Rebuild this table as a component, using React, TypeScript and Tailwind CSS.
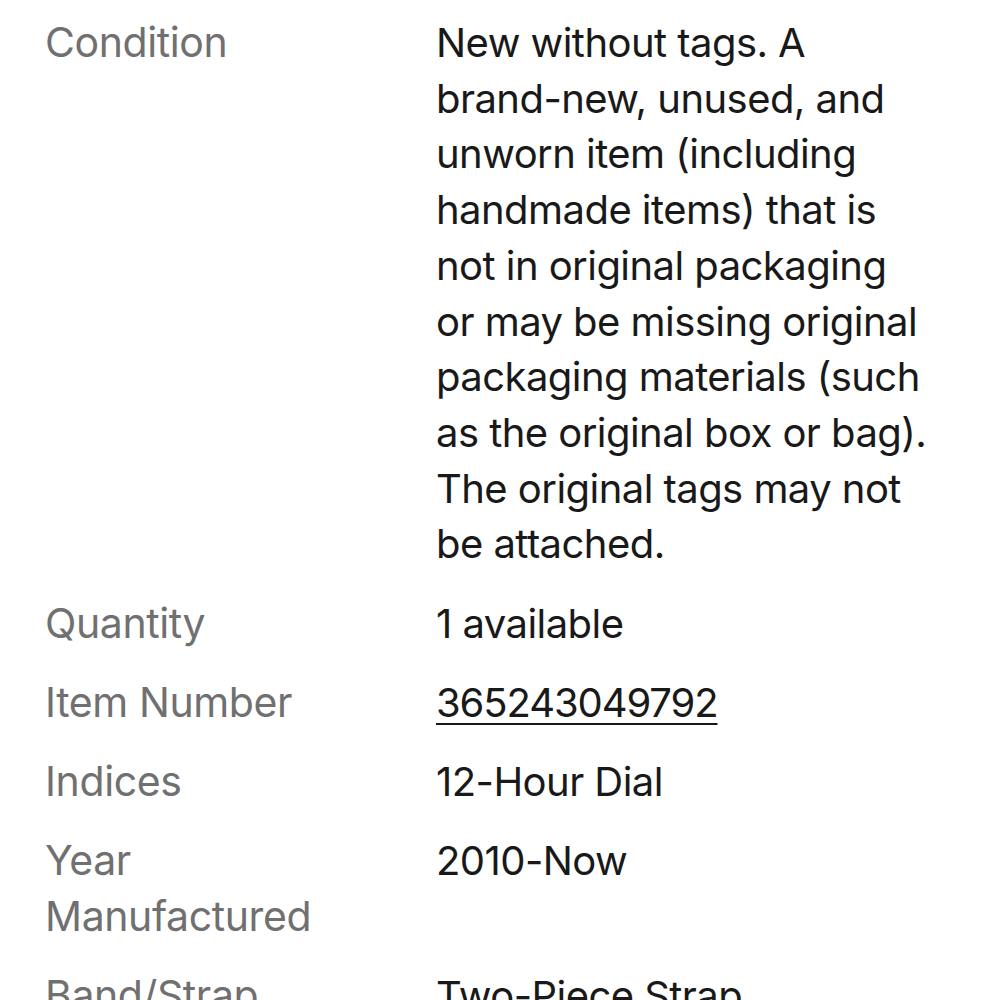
import React from "react";

const conditionLines = [
  "New without tags. A",
  "brand-new, unused, and",
  "unworn item (including",
  "handmade items) that is",
  "not in original packaging",
  "or may be missing original",
  "packaging materials (such",
  "as the original box or bag).",
  "The original tags may not",
  "be attached.",
];

const rows: { label: string; value: React.ReactNode }[] = [
  {
    label: "Condition",
    value: (
      <>
        {conditionLines.map((l) => (
          <span key={l} className="block whitespace-nowrap">
            {l}
          </span>
        ))}
      </>
    ),
  },
  { label: "Quantity", value: "1 available" },
  {
    label: "Item Number",
    value: (
      <span className="underline decoration-[2px] underline-offset-[6px] tracking-[-1.1px]">
        365243049792
      </span>
    ),
  },
  { label: "Indices", value: "12-Hour Dial" },
  { label: "Year Manufactured", value: "2010-Now" },
  { label: "Band/Strap", value: "Two-Piece Strap" },
];

export default function App() {
  return (
    <div
      className="w-[1000px] h-[1000px] overflow-hidden bg-white pt-[15px] pl-[45px] pr-[40px]"
      style={{ fontFamily: "Inter, 'Noto Sans', sans-serif" }}
    >
      <div className="flex flex-col gap-[23.5px]">
        {rows.map((r) => (
          <div key={r.label} className="flex leading-[55.7px]">
            <div className="w-[391px] shrink-0 pr-[50px] text-[41px] tracking-[-0.4px] text-[#707070]">
              {r.label}
            </div>
            <div className="flex-1 text-[40px] tracking-[-0.55px] text-[#191919]">{r.value}</div>
          </div>
        ))}
      </div>
    </div>
  );
}
